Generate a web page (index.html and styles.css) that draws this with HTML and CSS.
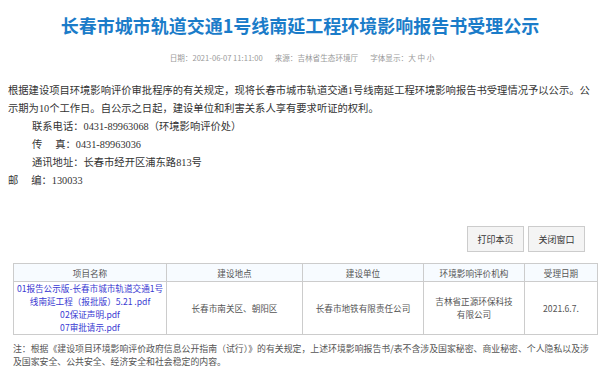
FILE: index.html
```html
<!DOCTYPE html>
<html lang="zh-CN">
<head>
<meta charset="utf-8">
<title>长春市城市轨道交通1号线南延工程环境影响报告书受理公示</title>
<link rel="stylesheet" href="styles.css">
</head>
<body>
<div class="page">
  <h1 class="title">长春市城市轨道交通1号线南延工程环境影响报告书受理公示</h1>
  <div class="meta">
    <span>日期：2021-06-07 11:11:00</span>
    <span>来源：吉林省生态环境厅</span>
    <span>字体显示：<a class="sz">大</a> <a class="sz">中</a> <a class="sz">小</a></span>
  </div>
  <div class="content">
    <p class="para">根据建设项目环境影响评价审批程序的有关规定，现将长春市城市轨道交通1号线南延工程环境影响报告书受理情况予以公示。公示期为10个工作日。自公示之日起，建设单位和利害关系人享有要求听证的权利。</p>
    <p class="indent">联系电话：0431-89963068（环境影响评价处）</p>
    <p class="indent">传　 真：0431-89963036</p>
    <p class="indent">通讯地址：长春市经开区浦东路813号</p>
    <p class="plain">邮　 编：130033</p>
  </div>
  <div class="actions">
    <button class="btn">打印本页</button>
    <button class="btn">关闭窗口</button>
  </div>
  <table class="grid">
    <colgroup>
      <col class="c1"><col class="c2"><col class="c3"><col class="c4"><col class="c5">
    </colgroup>
    <thead>
      <tr><th>项目名称</th><th>建设地点</th><th>建设单位</th><th>环境影响评价机构</th><th>受理日期</th></tr>
    </thead>
    <tbody>
      <tr>
        <td class="files"><a>01报告公示版-长春市城市轨道交通1号<br>线南延工程（报批版）5.21 .pdf</a><br><a>02保证声明.pdf</a><br><a>07审批请示.pdf</a></td>
        <td>长春市南关区、朝阳区</td>
        <td>长春市地铁有限责任公司</td>
        <td>吉林省正源环保科技<br>有限公司</td>
        <td>2021.6.7.</td>
      </tr>
    </tbody>
  </table>
  <p class="note">注：根据《建设项目环境影响评价政府信息公开指南（试行）》的有关规定，上述环境影响报告书/表不含涉及国家秘密、商业秘密、个人隐私以及涉及国家安全、公共安全、经济安全和社会稳定的内容。</p>
</div>
</body>
</html>
```
FILE: styles.css
```css
html, body {
  margin: 0;
  padding: 0;
  background: #fff;
}
.page {
  width: 600px;
  font-family: "Noto Sans CJK SC", sans-serif;
}
.title {
  margin: 13px 0 0;
  text-align: center;
  font-size: 18px;
  line-height: 24px;
  font-weight: bold;
  color: #1b7cc9;
}
.meta {
  margin-top: 15px;
  display: flex;
  justify-content: center;
  gap: 12px;
  font-size: 7.6px;
  line-height: 12px;
  color: #9a9a9a;
  padding-left: 4px;
}
.sz { color: #9a9a9a; }
.content {
  margin-top: 18px;
  padding: 0 6px 0 8px;
  font-family: "Liberation Serif", "Noto Sans CJK SC", serif;
  font-size: 10.3px;
  line-height: 18px;
  color: #333;
}
.content p { margin: 0; }
.indent { padding-left: 24px; }
.actions {
  margin-top: 36px;
  display: flex;
  justify-content: flex-end;
  gap: 4px;
  padding-right: 15px;
}
.btn {
  width: 57px;
  height: 26px;
  padding: 0;
  border: 1px solid #cccccc;
  background: #f4f4f4;
  font-family: "Noto Sans CJK SC", sans-serif;
  font-size: 9px;
  color: #333;
}
.grid {
  margin: 11px 0 0 13px;
  width: 584px;
  border-collapse: collapse;
  table-layout: fixed;
  font-family: "Noto Sans CJK SC", sans-serif;
  font-size: 8.6px;
  color: #555;
}
.c1 { width: 153px; }
.c2 { width: 136px; }
.c3 { width: 121px; }
.c4 { width: 101px; }
.c5 { width: 73px; }
.grid th, .grid td {
  border: 1px solid #cccccc;
  text-align: center;
  padding: 0;
}
.grid th {
  height: 17px;
  font-weight: normal;
  background: #f7fbff;
}
.grid td {
  height: 51px;
  line-height: 13px;
}
.files a { color: #3a3ad2; }
.note {
  margin: 7px 0 0;
  padding: 0 10px 0 13px;
  font-size: 8.9px;
  line-height: 13px;
  color: #555;
}
```
